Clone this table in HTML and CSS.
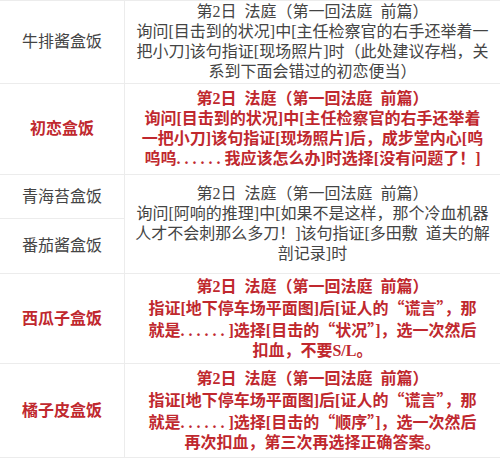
FILE: index.html
```html
<!DOCTYPE html>
<html lang="zh-CN">
<head>
<meta charset="utf-8">
<title>盒饭</title>
<link rel="stylesheet" href="styles.css">
</head>
<body>
<div class="table">
  <div class="cell name r1">牛排酱盒饭</div>
  <div class="cell desc r1"><p>第2日<span class="sp"></span>法庭（第一回法庭<span class="sp"></span>前篇）<br>询问[目击到的状况]中[主任检察官的右手还举着一<br>把小刀]该句指证[现场照片]时（此处建议存档，关<br>系到下面会错过的初恋便当）</p></div>

  <div class="cell name red r2">初恋盒饭</div>
  <div class="cell desc red r2"><p>第2日<span class="sp"></span>法庭（第一回法庭<span class="sp"></span>前篇）<br>询问[目击到的状况]中[主任检察官的右手还举着<br>一把小刀]该句指证[现场照片]后，成步堂内心[呜<br>呜呜<span class="dots">......</span>我应该怎么办]时选择[没有问题了！]</p></div>

  <div class="cell name r3">青海苔盒饭</div>
  <div class="cell desc span2"><p>第2日<span class="sp"></span>法庭（第一回法庭<span class="sp"></span>前篇）<br>询问[阿响的推理]中[如果不是这样，那个冷血机器<br>人才不会刺那么多刀！]该句指证[多田敷<span class="sp"></span>道夫的解<br>剖记录]时</p></div>
  <div class="cell name r4">番茄酱盒饭</div>

  <div class="cell name red r5">西瓜子盒饭</div>
  <div class="cell desc red r5"><p>第2日<span class="sp"></span>法庭（第一回法庭<span class="sp"></span>前篇）<br>指证[地下停车场平面图]后[证人的<span class="cj">“</span>谎言<span class="cj">”</span>，那<br>就是<span class="dots">......</span>]选择[目击的<span class="cj">“</span>状况<span class="cj">”</span>]，选一次然后<br>扣血，不要S/L。</p></div>

  <div class="cell name red r6">橘子皮盒饭</div>
  <div class="cell desc red r6"><p>第2日<span class="sp"></span>法庭（第一回法庭<span class="sp"></span>前篇）<br>指证[地下停车场平面图]后[证人的<span class="cj">“</span>谎言<span class="cj">”</span>，那<br>就是<span class="dots">......</span>]选择[目击的<span class="cj">“</span>顺序<span class="cj">”</span>]，选一次然后<br>再次扣血，第三次再选择正确答案。</p></div>
</div>
</body>
</html>
```

FILE: styles.css
```css
* { box-sizing: border-box; }
html, body { margin: 0; padding: 0; background: #fff; }
body {
  font-family: "Liberation Serif", "Noto Sans CJK SC", serif;
  font-size: 16px;
  line-height: 20px;
  color: #444;
}
.table {
  width: 500px;
  display: grid;
  grid-template-columns: 125px 375px;
  grid-template-rows: 83px 91px 44px 55px 90px 94px;
  border-top: 1px solid #ececec;
}
.cell {
  display: flex;
  align-items: center;
  justify-content: center;
  text-align: center;
  border-bottom: 1px solid #ececec;
  white-space: nowrap;
}
.name { border-right: 1px solid #ececec; grid-column: 1; }
.desc { grid-column: 2; padding: 0 4px; }
.r1 { grid-row: 1; }
.r2 { grid-row: 2; }
.r3 { grid-row: 3; }
.r4 { grid-row: 4; }
.span2 { grid-row: 3 / span 2; }
.r5 { grid-row: 5; }
.r6 { grid-row: 6; }
.desc p { margin: 0; }
.red { color: #c0282e; font-weight: 700; }
.sp { display: inline-block; width: 8px; }
.dots { letter-spacing: 4px; }
.cj { font-family: "Noto Sans CJK SC", sans-serif; }
```
